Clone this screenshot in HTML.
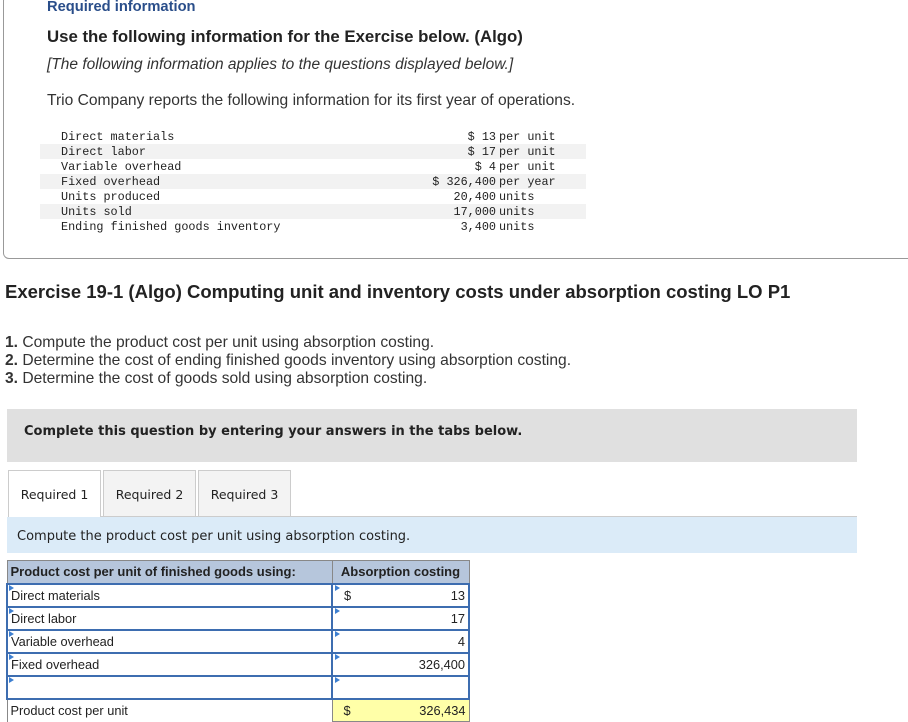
<!DOCTYPE html>
<html><head><style>
body{margin:0;width:908px;height:721px;position:relative;overflow:hidden;background:#fff;font-family:"Liberation Sans",sans-serif;color:#222}
.a{position:absolute;white-space:nowrap}
.m{font-family:"Liberation Mono",monospace;font-size:11.8px;color:#222}
.stripe{position:absolute;left:40px;width:546px;height:15px;background:#f2f2f2}
.tab{position:absolute;top:470px;height:47px;border:1px solid #ccc;border-bottom:none;background:#f3f3f3;font-size:12.5px;font-family:"DejaVu Sans",sans-serif;text-align:center;line-height:48px;box-sizing:border-box}
tr{height:23px}
td{padding:0 3px;font-size:12.8px;border:2px solid #3d6db0;color:#222}
.tri{position:absolute;width:0;height:0;border-top:3px solid transparent;border-bottom:3px solid transparent;border-left:5px solid #3d7fd0}
</style></head><body>
<div style="position:absolute;left:3px;top:-5px;width:920px;height:262px;border:1px solid #999;border-radius:6px"></div>
<div class="a" style="left:47px;top:-1px;font-size:14.7px;font-weight:bold;color:#2a4e8a">Required information</div>
<div class="a" style="left:47px;top:27px;font-size:16.8px;font-weight:bold">Use the following information for the Exercise below. (Algo)</div>
<div class="a" style="left:47px;top:56px;font-size:15.5px;font-style:italic;color:#333">[The following information applies to the questions displayed below.]</div>
<div class="a" style="left:47px;top:92px;font-size:15.6px;color:#333">Trio Company reports the following information for its first year of operations.</div>
<div class="stripe" style="top:144px"></div><div class="stripe" style="top:174px"></div><div class="stripe" style="top:204px"></div>
<div class="a m" style="left:61px;top:130px;line-height:15px">Direct materials<br>Direct labor<br>Variable overhead<br>Fixed overhead<br>Units produced<br>Units sold<br>Ending finished goods inventory</div>
<div class="a m" style="right:412px;top:130px;line-height:15px;text-align:right">$ 13<br>$ 17<br>$ 4<br>$ 326,400<br>20,400<br>17,000<br>3,400</div>
<div class="a m" style="left:499px;top:130px;line-height:15px">per unit<br>per unit<br>per unit<br>per year<br>units<br>units<br>units</div>
<div class="a" style="left:5px;top:281px;font-size:18.5px;font-weight:bold">Exercise 19-1 (Algo) Computing unit and inventory costs under absorption costing LO P1</div>
<div class="a" style="left:5px;top:334px;font-size:15.6px;line-height:18px;color:#333"><b>1.</b> Compute the product cost per unit using absorption costing.<br><b>2.</b> Determine the cost of ending finished goods inventory using absorption costing.<br><b>3.</b> Determine the cost of goods sold using absorption costing.</div>
<div style="position:absolute;left:7px;top:409px;width:850px;height:53px;background:#e0e0e0"></div>
<div class="a" style="left:24px;top:424px;font-size:13px;font-weight:bold;font-family:'DejaVu Sans',sans-serif">Complete this question by entering your answers in the tabs below.</div>
<div class="tab" style="left:8px;width:93px;background:#fff;height:48px">Required 1</div>
<div class="tab" style="left:103px;width:93px">Required 2</div>
<div class="tab" style="left:198px;width:93px">Required 3</div>
<div style="position:absolute;left:101px;top:516px;width:756px;height:1px;background:#ccc"></div>
<div style="position:absolute;left:7px;top:517px;width:850px;height:36px;background:#dbebf8"></div>
<div class="a" style="left:17px;top:529px;font-size:13px;font-family:'DejaVu Sans',sans-serif">Compute the product cost per unit using absorption costing.</div>
<table style="position:absolute;left:6px;top:560px;border-collapse:collapse;width:464px">
<tr><td style="background:#b6c6dc;border:1px solid #888;font-weight:bold;font-size:13px;width:318px">Product cost per unit of finished goods using:</td><td style="background:#b6c6dc;border:1px solid #888;font-weight:bold;font-size:13px;text-align:center">Absorption costing</td></tr>
<tr><td>Direct materials</td><td><span style="float:left;padding-left:8px">$</span><span style="float:right">13</span></td></tr>
<tr><td>Direct labor</td><td style="text-align:right">17</td></tr>
<tr><td>Variable overhead</td><td style="text-align:right">4</td></tr>
<tr><td>Fixed overhead</td><td style="text-align:right">326,400</td></tr>
<tr><td>&nbsp;</td><td></td></tr>
<tr><td style="border:none;border-left:1px solid #888">Product cost per unit</td><td style="border:1px solid #888;background:#ffffa8"><span style="float:left;padding-left:8px">$</span><span style="float:right">326,434</span></td></tr>
</table>
<div class="tri" style="left:9px;top:585px"></div><div class="tri" style="left:9px;top:608px"></div><div class="tri" style="left:9px;top:631px"></div><div class="tri" style="left:9px;top:654px"></div><div class="tri" style="left:9px;top:677px"></div>
<div class="tri" style="left:335px;top:585px"></div><div class="tri" style="left:335px;top:608px"></div><div class="tri" style="left:335px;top:631px"></div><div class="tri" style="left:335px;top:654px"></div><div class="tri" style="left:335px;top:677px"></div>
</body></html>
